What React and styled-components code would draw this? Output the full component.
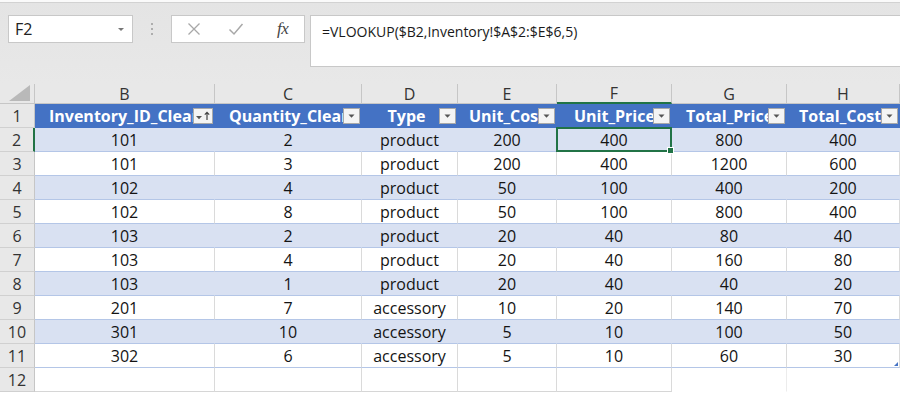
import React from 'react';
import styled, { createGlobalStyle, css } from 'styled-components';

const GlobalStyle = createGlobalStyle`
  html, body { margin: 0; padding: 0; background: #ffffff; }
  body { font-family: "Open Sans", "Noto Sans", sans-serif; overflow: hidden; }
  * { box-sizing: border-box; }
`;

const Page = styled.div`
  width: 900px;
  height: 393px;
  overflow: hidden;
  display: flex;
  flex-direction: column;
  background: #ffffff;
`;

const TopStrip = styled.div`
  height: 3px;
  background: #fafafa;
  border-bottom: 1px solid #d2d2d2;
  flex: none;
`;

const FormulaArea = styled.div`
  height: 81px;
  flex: none;
  background: linear-gradient(#e4e4e4, #e8e8e8);
  display: flex;
  align-items: flex-start;
  padding: 12px 0 0 8px;
`;

const NameBox = styled.div`
  width: 125px;
  height: 28px;
  background: #ffffff;
  border: 1px solid #c8c8c8;
  display: flex;
  align-items: center;
  justify-content: space-between;
  padding: 0 8px 0 6px;
  font-size: 16px;
  color: #222;
`;

const Caret = styled.span`
  width: 0;
  height: 0;
  border-left: 3px solid transparent;
  border-right: 3px solid transparent;
  border-top: 3px solid #777;
`;

const Dots = styled.div`
  width: 38px;
  height: 28px;
  display: flex;
  flex-direction: column;
  align-items: center;
  justify-content: center;
  gap: 3px;
  span { width: 2px; height: 2px; background: #9a9a9a; border-radius: 1px; }
`;

const FxGroup = styled.div`
  width: 134px;
  height: 28px;
  background: #ffffff;
  border: 1px solid #c8c8c8;
  display: flex;
  align-items: center;
  padding-left: 15px;
  gap: 27px;
`;

const FxLabel = styled.span`
  font-family: "Liberation Serif", "DejaVu Serif", serif;
  font-style: italic;
  font-size: 17px;
  color: #444;
  margin-left: 6px;
  letter-spacing: -0.5px;
`;

const FormulaBox = styled.div`
  flex: 1;
  height: 52px;
  margin-left: 5px;
  margin-right: -4px;
  background: #ffffff;
  border: 1px solid #c8c8c8;
  padding: 6px 0 0 11px;
  font-size: 14px;
  color: #1a1a1a;
`;

const Sheet = styled.div`
  display: grid;
  grid-template-columns: 35px 180px 147px 96px 99px 115px 115px 113px;
  grid-template-rows: 20px repeat(12, 24px);
  font-size: 16px;
  font-weight: 500;
  color: #141414;
`;

const Corner = styled.div`
  background: #e8e8e8;
  border-right: 1px solid #c6c6c6;
  border-bottom: 1px solid #c6c6c6;
  display: flex;
  align-items: flex-end;
  justify-content: flex-end;
  padding: 0 3px 2px 0;
`;

const ColHeader = styled.div`
  background: #e8e8e8;
  border-right: 1px solid #c6c6c6;
  border-bottom: ${p => (p.$selected ? '2px solid #217346' : '1px solid #c6c6c6')};
  display: flex;
  align-items: center;
  justify-content: center;
  font-size: 16px;
  font-weight: 400;
  color: #333;
  line-height: 1;
`;

const RowHeader = styled.div`
  background: #e8e8e8;
  border-right: ${p => (p.$selected ? '2px solid #217346' : '1px solid #c6c6c6')};
  border-bottom: 1px solid #d0d0d0;
  display: flex;
  align-items: center;
  justify-content: center;
  font-size: 16px;
  font-weight: 400;
  color: #333;
`;

const HeadCell = styled.div`
  background: #4472c4;
  color: #ffffff;
  font-weight: 700;
  font-size: 16px;
  display: flex;
  align-items: center;
  padding-right: 2px;
  border-bottom: 1px solid #4472c4;
  overflow: hidden;
`;

const HeadText = styled.span`
  flex: 1;
  min-width: 0;
  overflow: hidden;
  white-space: nowrap;
  text-align: center;
  padding-left: ${p => p.$pad}px;
`;

const FilterButton = styled.div`
  flex: none;
  width: ${p => (p.$sort ? 20 : 17)}px;
  height: 16px;
  background: #f4f4f4;
  border: 1px solid #a9a9a9;
  display: flex;
  align-items: center;
  justify-content: center;
`;

const bandStyle = css`
  background: #d9e1f2;
  border-right: 1px solid #d9e1f2;
`;

const DataCell = styled.div`
  position: relative;
  background: #ffffff;
  border-right: 1px solid #dadada;
  border-bottom: 1px solid ${p => (p.$outside ? '#d6d6d6' : '#b4c6e7')};
  display: flex;
  align-items: center;
  justify-content: center;
  white-space: nowrap;
  ${p => p.$band && bandStyle}
  ${p => p.$blank && css`border-bottom-color: transparent; border-right-color: ${p.$last ? 'transparent' : '#ececec'};`}
  ${p => p.$active && css`
    &::after {
      content: '';
      position: absolute;
      left: -1px;
      top: -1px;
      right: -1px;
      bottom: -1px;
      border: 2px solid #217346;
    }
    &::before {
      content: '';
      position: absolute;
      right: -3px;
      bottom: -3px;
      width: 5px;
      height: 5px;
      background: #217346;
      border: 1px solid #ffffff;
      z-index: 2;
    }
  `}
  ${p => p.$resize && css`
    &::after {
      content: '';
      position: absolute;
      right: 1px;
      bottom: 1px;
      width: 0;
      height: 0;
      border-left: 4px solid transparent;
      border-bottom: 4px solid #4472c4;
    }
  `}
`;

const columns = ['B', 'C', 'D', 'E', 'F', 'G', 'H'];
const headers = [
  { name: 'Inventory_ID_Clean', pad: 14, sort: true },
  { name: 'Quantity_Clean', pad: 14 },
  { name: 'Type', pad: 12 },
  { name: 'Unit_Cost', pad: 11 },
  { name: 'Unit_Price', pad: 17 },
  { name: 'Total_Price', pad: 14 },
  { name: 'Total_Cost', pad: 12 },
];
const rows = [
  [101, 2, 'product', 200, 400, 800, 400],
  [101, 3, 'product', 200, 400, 1200, 600],
  [102, 4, 'product', 50, 100, 400, 200],
  [102, 8, 'product', 50, 100, 800, 400],
  [103, 2, 'product', 20, 40, 80, 40],
  [103, 4, 'product', 20, 40, 160, 80],
  [103, 1, 'product', 20, 40, 40, 20],
  [201, 7, 'accessory', 10, 20, 140, 70],
  [301, 10, 'accessory', 5, 10, 100, 50],
  [302, 6, 'accessory', 5, 10, 60, 30],
];

const FilterIcon = ({ sort }) => (
  <FilterButton $sort={sort}>
    <svg width={sort ? 16 : 9} height="10" viewBox={sort ? '0 0 16 10' : '0 0 9 10'}>
      <path d={sort ? 'M1 5h6l-3 3.2z' : 'M1.5 3.5h6l-3 3.2z'} fill="#555" />
      {sort && <path d="M12 9V1.5M9.8 3.7L12 1.3l2.2 2.4" stroke="#444" strokeWidth="1.2" fill="none" />}
    </svg>
  </FilterButton>
);

export default function App() {
  return (
    <Page>
      <GlobalStyle />
      <TopStrip />
      <FormulaArea>
        <NameBox>
          <span>F2</span>
          <Caret />
        </NameBox>
        <Dots>
          <span />
          <span />
          <span />
        </Dots>
        <FxGroup>
          <svg width="14" height="14" viewBox="0 0 14 14">
            <path d="M1.5 1.5l11 11M12.5 1.5l-11 11" stroke="#a8a8a8" strokeWidth="1.3" fill="none" />
          </svg>
          <svg width="16" height="14" viewBox="0 0 16 14">
            <path d="M1.5 7.5l4.5 4.5 8.5-10" stroke="#a8a8a8" strokeWidth="1.5" fill="none" />
          </svg>
          <FxLabel>fx</FxLabel>
        </FxGroup>
        <FormulaBox>=VLOOKUP($B2,Inventory!$A$2:$E$6,5)</FormulaBox>
      </FormulaArea>
      <Sheet>
        <Corner>
          <svg width="22" height="16" viewBox="0 0 22 16">
            <path d="M21 0V16H0z" fill="#b9b9b9" />
          </svg>
        </Corner>
        {columns.map(c => (
          <ColHeader key={c} $selected={c === 'F'}>{c}</ColHeader>
        ))}
        <RowHeader>1</RowHeader>
        {headers.map(h => (
          <HeadCell key={h.name}>
            <HeadText $pad={h.pad}>{h.name}</HeadText>
            <FilterIcon sort={h.sort} />
          </HeadCell>
        ))}
        {rows.map((r, i) => {
          const rowNum = i + 2;
          const band = i % 2 === 0;
          return (
            <React.Fragment key={rowNum}>
              <RowHeader $selected={rowNum === 2}>{rowNum}</RowHeader>
              {r.map((v, j) => (
                <DataCell
                  key={j}
                  $band={band}
                  $active={rowNum === 2 && j === 4}
                  $resize={rowNum === 11 && j === 6}
                >
                  {v}
                </DataCell>
              ))}
            </React.Fragment>
          );
        })}
        <RowHeader>12</RowHeader>
        {columns.map((c, j) => (
          <DataCell key={c} $outside $blank={j >= 5} $last={j === 6} />
        ))}
      </Sheet>
    </Page>
  );
}
